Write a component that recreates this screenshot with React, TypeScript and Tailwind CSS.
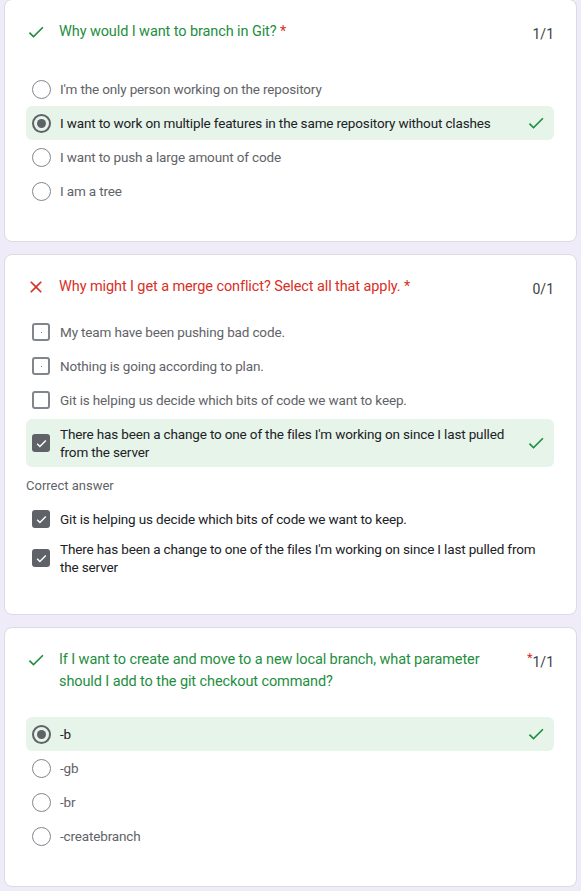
import React from 'react';

type Opt = { text: string; selected?: boolean; correct?: boolean; dot?: boolean };

const GREEN = '#1e8e3e';

function Check({ className = '' }: { className?: string }) {
  return (
    <svg className={className} width="20" height="20" viewBox="0 0 24 24" fill={GREEN}>
      <path d="M9 16.17L4.83 12l-1.42 1.41L9 19 21 7l-1.41-1.41z" />
    </svg>
  );
}

function Cross() {
  return (
    <svg width="20" height="20" viewBox="0 0 24 24" fill="#d93025">
      <path d="M19 6.41L17.59 5 12 10.59 6.41 5 5 6.41 10.59 12 5 17.59 6.41 19 12 13.41 17.59 19 19 17.59 13.41 12z" />
    </svg>
  );
}

function Radio({ selected }: { selected?: boolean }) {
  return (
    <span className={`w-[19px] h-[19px] rounded-full flex items-center justify-center shrink-0 ${selected ? 'border-2 border-[#5f6368]' : 'border-[1.5px] border-[#80868b]'}`}>
      {selected && <span className="w-[9px] h-[9px] rounded-full bg-[#5f6368]" />}
    </span>
  );
}

function Box({ checked, dot }: { checked?: boolean; dot?: boolean }) {
  if (checked) {
    return (
      <span className="w-[18px] h-[18px] rounded-[3px] bg-[#5f6368] flex items-center justify-center shrink-0">
        <svg width="13" height="13" viewBox="0 0 24 24" fill="none" stroke="white" strokeWidth={2.6}>
          <path d="M4 12.5l5 5L20 6.5" />
        </svg>
      </span>
    );
  }
  return (
    <span className="w-[18px] h-[18px] rounded-[3px] border-2 border-[#80868b] flex items-center justify-center shrink-0">
      {dot && <span className="w-[1px] h-[1px] bg-[#80868b]" />}
    </span>
  );
}

function OptionRow({ opt, kind }: { opt: Opt; kind: 'radio' | 'box' }) {
  const hl = opt.selected && opt.correct;
  return (
    <div className={`flex items-center min-h-[34px] pl-[5px] pr-[8px] rounded-md ${hl ? 'bg-[#e6f4ea] py-[6px]' : 'py-[3px]'}`}>
      <div className="w-[20px] flex justify-center shrink-0">
        {kind === 'radio' ? <Radio selected={opt.selected} /> : <Box checked={opt.selected} dot={opt.dot} />}
      </div>
      <span className={`ml-[9px] flex-1 text-[13.5px] tracking-[-0.15px] leading-[18px] ${opt.selected ? 'text-[#202124]' : 'text-[#5f6368]'}`}>
        {opt.text}
      </span>
      {hl && <Check className="ml-3 shrink-0" />}
    </div>
  );
}

function Card({ children, className = '' }: { children: React.ReactNode; className?: string }) {
  return (
    <div className={`bg-white border border-[#dadce0] rounded-lg pl-[21px] pr-[22px] pt-[21px] ${className}`}>
      {children}
    </div>
  );
}

function Header({ ok, title, score, starRight }: { ok: boolean; title: string; score: string; starRight?: boolean }) {
  const col = ok ? 'text-[#1e8e3e]' : 'text-[#d93025]';
  return (
    <div className="flex items-start">
      <div className="w-[33px] pt-[1px] shrink-0">{ok ? <Check /> : <Cross />}</div>
      <div className={`flex-1 text-[14.5px] tracking-[-0.1px] leading-[22px] ${col}`}>
        {title}
        {!starRight && <span className="text-[#d93025]"> *</span>}
      </div>
      <div className="text-[14px] leading-[22px] text-[#3c4043] pl-4 pt-[2px]">
        {starRight && <span className="text-[#d93025] align-top text-[13px] leading-[14px]">*</span>}
        {score}
      </div>
    </div>
  );
}

export default function App() {
  const q1: Opt[] = [
    { text: "I'm the only person working on the repository" },
    { text: 'I want to work on multiple features in the same repository without clashes', selected: true, correct: true },
    { text: 'I want to push a large amount of code' },
    { text: 'I am a tree' },
  ];
  const q2: Opt[] = [
    { text: 'My team have been pushing bad code.', dot: true },
    { text: 'Nothing is going according to plan.', dot: true },
    { text: 'Git is helping us decide which bits of code we want to keep.' },
    { text: "There has been a change to one of the files I'm working on since I last pulled from the server", selected: true, correct: true },
  ];
  const q3: Opt[] = [
    { text: '-b', selected: true, correct: true },
    { text: '-gb' },
    { text: '-br' },
    { text: '-createbranch' },
  ];

  return (
    <div className="min-h-[891px] bg-[#f0ebf8] px-[4px] pb-[6px] flex flex-col gap-[12px]" style={{ fontFamily: 'Roboto, "Liberation Sans", sans-serif' }}>
      <Card className="pb-[33px] -mt-px">
        <Header ok title="Why would I want to branch in Git?" score="1/1" />
        <div className="mt-[27px]">
          {q1.map((o) => <OptionRow key={o.text} opt={o} kind="radio" />)}
        </div>
      </Card>

      <Card className="pb-[38px]">
        <Header ok={false} title="Why might I get a merge conflict? Select all that apply." score="0/1" />
        <div className="mt-[15px] flex flex-col">
          {q2.map((o, i) => (
            <div key={o.text} className={i === 3 ? 'mt-[2px]' : ''}>
              <OptionRow opt={o} kind="box" />
            </div>
          ))}
        </div>
        <div className="mt-[10px] text-[13px] leading-[18px] text-[#5f6368]">Correct answer</div>
        <div className="mt-[7px] pr-[4px]">
          <div className="flex items-center min-h-[34px] pl-[5px]">
            <div className="w-[20px] flex justify-center shrink-0"><Box checked /></div>
            <span className="ml-[9px] text-[13.5px] tracking-[-0.15px] leading-[18px] text-[#202124]">Git is helping us decide which bits of code we want to keep.</span>
          </div>
          <div className="flex items-center min-h-[34px] pl-[5px] pt-[4px]">
            <div className="w-[20px] flex justify-center shrink-0"><Box checked /></div>
            <span className="ml-[9px] text-[13.5px] tracking-[-0.15px] leading-[18px] text-[#202124]">There has been a change to one of the files I'm working on since I last pulled from the server</span>
          </div>
        </div>
      </Card>

      <Card className="pb-[33px]">
        <Header ok title="If I want to create and move to a new local branch, what parameter should I add to the git checkout command?" score="1/1" starRight />
        <div className="mt-[24px]">
          {q3.map((o) => <OptionRow key={o.text} opt={o} kind="radio" />)}
        </div>
      </Card>
    </div>
  );
}
